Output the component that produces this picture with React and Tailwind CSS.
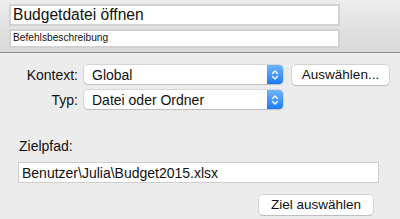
import React from "react";

function Stepper() {
  return (
    <div className="w-[16px] h-full rounded-r-[4px] bg-gradient-to-b from-[#6cb4fb] to-[#1a7cf7] flex items-center justify-center">
      <svg width="8" height="14" viewBox="0 0 8 14" fill="none" stroke="white" strokeWidth="1.4" strokeLinecap="round" strokeLinejoin="round">
        <path d="M1.5 5.5 L4 3 L6.5 5.5" />
        <path d="M1.5 8.5 L4 11 L6.5 8.5" />
      </svg>
    </div>
  );
}

function Popup({ value }) {
  return (
    <div className="w-[199px] h-[19px] flex bg-white rounded-[4px] shadow-[0_0_0_0.5px_rgba(0,0,0,0.18),0_1px_1px_rgba(0,0,0,0.12)]">
      <div className="flex-1 pl-[8px] flex items-center text-[14px] text-[#111] leading-none">{value}</div>
      <Stepper />
    </div>
  );
}

function Button({ children, className }) {
  return (
    <div className={"bg-white rounded-[4px] flex items-center justify-center text-[13.5px] text-[#111] leading-none shadow-[0_0_0_0.5px_rgba(0,0,0,0.2),0_1px_1px_rgba(0,0,0,0.12)] " + className}>
      {children}
    </div>
  );
}

export default function App() {
  return (
    <div className="w-[400px] h-[219px] overflow-hidden bg-[#ececec] font-['Liberation_Sans',Arial,sans-serif] text-[#111]">
      <div className="h-[52px] bg-gradient-to-b from-[#ededed] to-[#d9d9d9] pt-[4px] pl-[9px] flex flex-col gap-[3px]">
        <div className="w-[331px] h-[22px] bg-white border-2 border-[#d2d2d2] flex items-center pl-[2px] text-[15.6px] leading-none">
          Budgetdatei öffnen
        </div>
        <div className="w-[331px] h-[19px] bg-white border-2 border-[#d2d2d2] flex items-center pl-[2px] text-[10.2px] leading-none">
          Befehlsbeschreibung
        </div>
      </div>
      <div className="h-px bg-[#8a8a8a]" />
      <div className="h-px bg-[#f3f3f3]" />
      <div className="pt-[11px] flex flex-col gap-[6px]">
        <div className="flex items-center h-[19px]">
          <div className="w-[78px] text-right text-[14px] leading-none">Kontext:</div>
          <div className="ml-[6px]"><Popup value="Global" /></div>
          <Button className="ml-[9px] w-[97px] h-[20px]">Auswählen...</Button>
        </div>
        <div className="flex items-center h-[19px]">
          <div className="w-[78px] text-right text-[14px] leading-none">Typ:</div>
          <div className="ml-[6px]"><Popup value="Datei oder Ordner" /></div>
        </div>
      </div>
      <div className="mt-[29px] pl-[19px] text-[14px] leading-[16px]">Zielpfad:</div>
      <div className="mt-[8px] ml-[18px] w-[361px] h-[21px] bg-white border border-[#cdcdcd] flex items-center pl-[3px] text-[14px] leading-none">
        Benutzer\Julia\Budget2015.xlsx
      </div>
      <div className="mt-[12px] ml-[259px]">
        <Button className="w-[114px] h-[20px]">Ziel auswählen</Button>
      </div>
    </div>
  );
}
